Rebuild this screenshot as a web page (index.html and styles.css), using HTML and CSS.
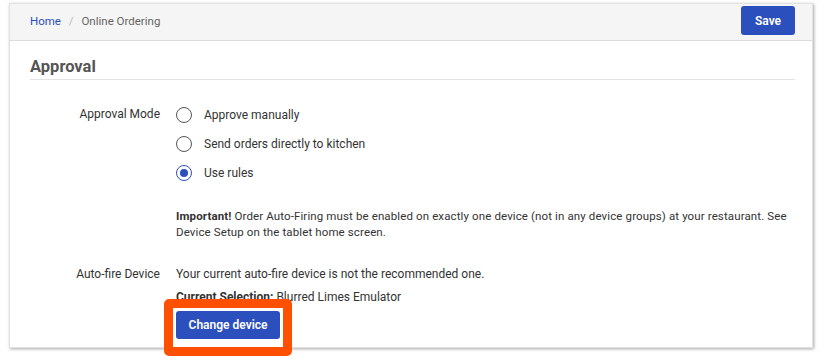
FILE: index.html
```html
<!DOCTYPE html>
<html lang="en">
<head>
    <meta charset="UTF-8">
    <title>Online Ordering</title>
    <link rel="stylesheet" href="styles.css">
</head>
<body>
    <div class="page">
        <div class="card">
            <div class="topbar">
                <nav class="crumbs">
                    <a href="#">Home</a>
                    <span class="sep">/</span>
                    <span class="current">Online Ordering</span>
                </nav>
                <button class="btn save">Save</button>
            </div>

            <div class="card-body">
                <h2 class="section-title">Approval</h2>

                <div class="form">
                    <div class="label">Approval Mode</div>
                    <div class="field">
                        <label class="radio"><span class="dot"></span>Approve manually</label>
                        <label class="radio"><span class="dot"></span>Send orders directly to kitchen</label>
                        <label class="radio"><span class="dot checked"></span>Use rules</label>
                    </div>

                    <div class="label"></div>
                    <p class="note"><strong>Important!</strong> Order Auto-Firing must be enabled on exactly one device (not in any device groups) at your restaurant. See Device Setup on the tablet home screen.</p>

                    <div class="label label-text">Auto-fire Device</div>
                    <div class="field device">
                        <p>Your current auto-fire device is not the recommended one.</p>
                        <p><strong>Current Selection:</strong> Blurred Limes Emulator</p>
                        <div class="highlight">
                            <button class="btn change">Change device</button>
                        </div>
                    </div>
                </div>
            </div>
        </div>
    </div>
</body>
</html>
```

FILE: styles.css
```css
* {
    margin: 0;
    padding: 0;
    box-sizing: border-box;
}

html, body {
    height: 100%;
}

body {
    font-family: Roboto, 'Liberation Sans', sans-serif;
    color: #333;
    background: #fff;
}

.page {
    padding: 3px 17px 20px 9px;
}

.card {
    position: relative;
    border: 1px solid #e2e2e2;
    background: #fff;
    box-shadow: 1px 1px 3px rgba(0, 0, 0, 0.35);
    height: 345px;
}

.topbar {
    height: 37px;
    background: #f5f5f5;
    border-bottom: 1px solid #dcdcdc;
    display: flex;
    justify-content: space-between;
    align-items: flex-start;
    padding: 0 17px 0 20px;
}

.crumbs {
    font-size: 11.5px;
    line-height: 14px;
    margin-top: 10px;
    color: #666;
}

.crumbs a {
    color: #2b4fbd;
    text-decoration: none;
}

.crumbs .sep {
    color: #bbb;
    margin: 0 5px;
}

.btn {
    font-family: inherit;
    border: none;
    border-radius: 3px;
    background: #2b4fbd;
    color: #fff;
    font-weight: 600;
    font-size: 12px;
    cursor: pointer;
}

.save {
    margin-top: 2px;
    width: 54px;
    height: 29px;
}

.card-body {
    padding: 0 17px 0 20px;
}

.section-title {
    font-size: 16.5px;
    line-height: 20px;
    font-weight: 700;
    color: #555;
    margin-top: 16px;
    padding-bottom: 2px;
    border-bottom: 1px solid #e4e4e4;
}

.form {
    display: grid;
    grid-template-columns: 130px 1fr;
    column-gap: 16px;
    margin-top: 20px;
    font-size: 12px;
}

.label {
    text-align: right;
    line-height: 29px;
    color: #333;
}

.label-text {
    line-height: 16px;
    margin-top: 26px;
}

.field {
    display: flex;
    flex-direction: column;
}

.radio {
    display: flex;
    align-items: center;
    height: 29px;
    color: #333;
}

.dot {
    width: 16px;
    height: 16px;
    border: 1.5px solid #555;
    border-radius: 50%;
    margin-right: 12px;
    display: flex;
    align-items: center;
    justify-content: center;
}

.dot.checked {
    border-color: #2b4fbd;
}

.dot.checked::after {
    content: '';
    width: 8px;
    height: 8px;
    border-radius: 50%;
    background: #2b4fbd;
}

.note {
    margin-top: 21px;
    font-size: 11.5px;
    letter-spacing: 0.12px;
    line-height: 16px;
    color: #333;
}

.device {
    margin-top: 26px;
    line-height: 16px;
}

.device p + p {
    margin-top: 7px;
}

.highlight {
    position: relative;
    z-index: 2;
    align-self: flex-start;
    margin-top: 6px;
}

/* orange annotation box drawn over the card edge */
.highlight::after {
    content: '';
    position: absolute;
    top: -12px;
    left: -12px;
    right: -12px;
    bottom: -17px;
    border: 9px solid #fe5000;
    border-radius: 5px;
    pointer-events: none;
}

.change {
    display: block;
    width: 104px;
    height: 28px;
}
```
